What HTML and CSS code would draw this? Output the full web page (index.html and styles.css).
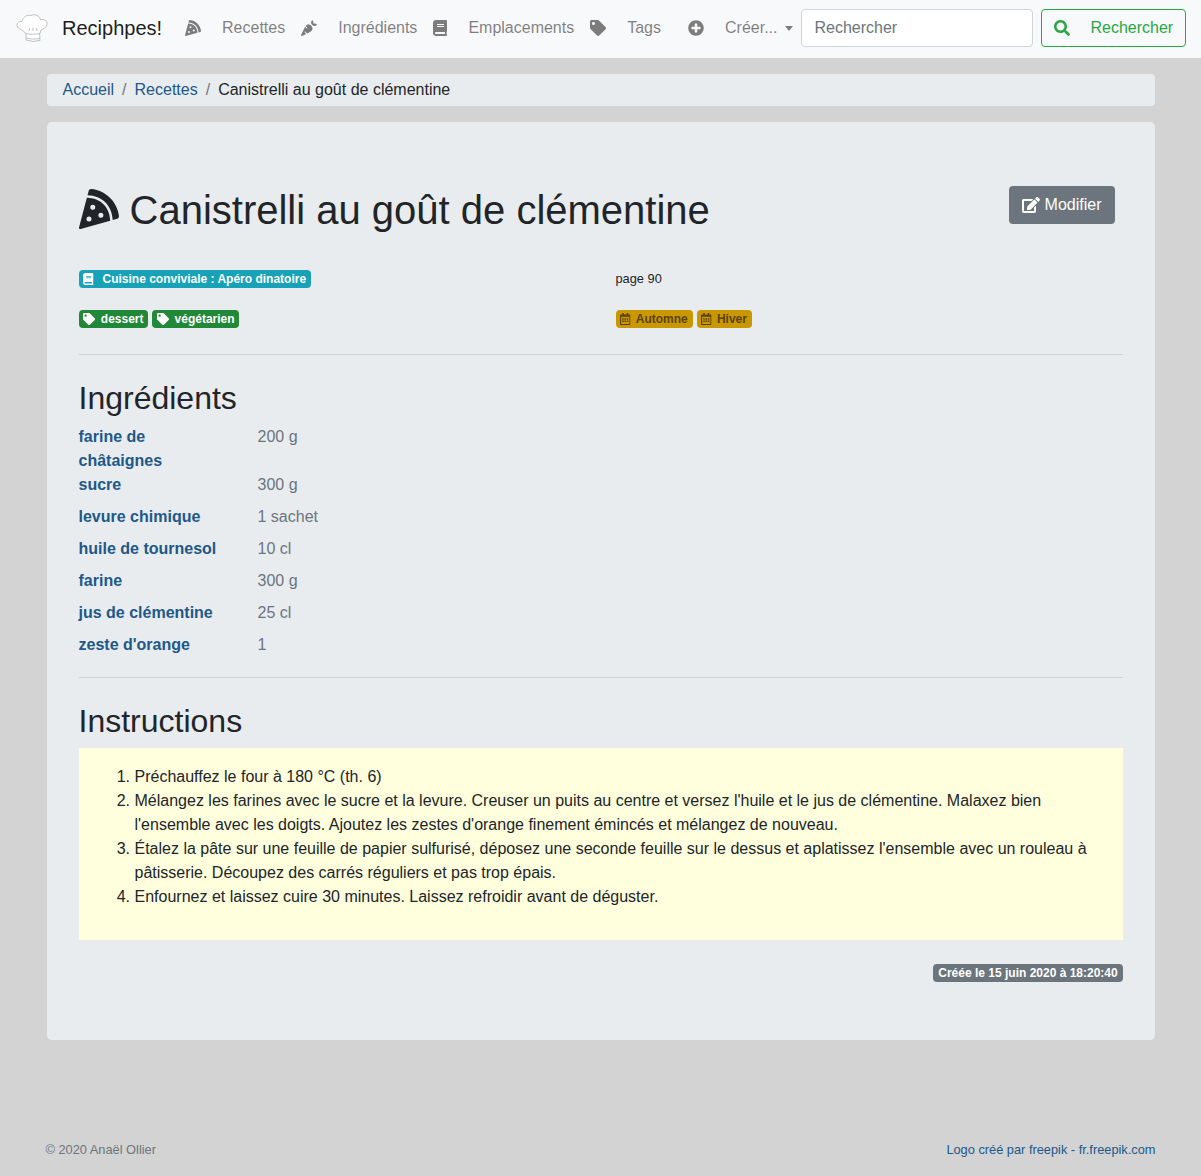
FILE: index.html
```html
<!DOCTYPE html>
<html lang="fr">
<head>
    <meta charset="UTF-8">
    <title>Reciphpes!</title>
    <link rel="stylesheet" href="styles.css">
</head>
<body>
    <svg class="defs" width="0" height="0">
        <symbol id="i-pizza" viewBox="0 0 512 512"><path d="M158.87.15c-16.16-1.52-31.2 8.42-35.33 24.12l-14.81 56.27c187.62 5.49 314.54 130.61 322.48 317l56.94-15.78c15.72-4.36 25.49-19.68 23.62-35.9C490.89 165.08 340.78 17.32 158.87.15zm-58.47 112L.55 491.64a16.21 16.21 0 0 0 20 19.75l379-105.1c-4.27-174.89-123.08-292.14-299.15-294.1zM128 416a32 32 0 1 1 32-32 32 32 0 0 1-32 32zm48-152a32 32 0 1 1 32-32 32 32 0 0 1-32 32zm104 104a32 32 0 1 1 32-32 32 32 0 0 1-32 32z"/></symbol>
        <symbol id="i-carrot" viewBox="0 0 512 512"><path d="M298.2 156.6c-52.7-25.7-114.5-10.5-150.2 32.8l55.2 55.2c6.3 6.3 6.3 16.4 0 22.6-3.1 3.1-7.2 4.7-11.3 4.7s-8.2-1.6-11.3-4.7L130.4 217 2.3 479.7c-2.9 6-3.1 13.3 0 19.7 5.4 11.1 18.9 15.7 30 10.3l133.6-65.2-49.2-49.2c-6.3-6.2-6.3-16.4 0-22.6 6.3-6.2 16.4-6.2 22.6 0l57 57 102-49.8c24-11.7 44.5-31.3 57.1-57.1 30.1-61.7 4.5-136.1-57.2-166.2zm92.1-34.9C409.8 81 399.2 32.9 360 0c-50.3 41.7-52.5 107.5-7.9 151.9l8 8c44.4 44.6 110.3 42.4 151.9-7.9-32.9-39.2-81-49.8-121.7-30.3z"/></symbol>
        <symbol id="i-book" viewBox="0 0 448 512"><path d="M448 360V24c0-13.3-10.7-24-24-24H96C43 0 0 43 0 96v320c0 53 43 96 96 96h328c13.3 0 24-10.7 24-24v-16c0-7.5-3.5-14.3-8.9-18.7-4.2-15.4-4.2-59.3 0-74.7 5.4-4.3 8.9-11.1 8.9-18.6zM128 134c0-3.3 2.7-6 6-6h212c3.3 0 6 2.7 6 6v20c0 3.3-2.7 6-6 6H134c-3.3 0-6-2.7-6-6v-20zm0 64c0-3.3 2.7-6 6-6h212c3.3 0 6 2.7 6 6v20c0 3.3-2.7 6-6 6H134c-3.3 0-6-2.7-6-6v-20zm253.4 250H96c-17.7 0-32-14.3-32-32 0-17.6 14.4-32 32-32h285.4c-1.9 17.1-1.9 46.9 0 64z"/></symbol>
        <symbol id="i-tag" viewBox="0 0 512 512"><path d="M0 252.118V48C0 21.49 21.49 0 48 0h204.118a48 48 0 0 1 33.941 14.059l211.882 211.882c18.745 18.745 18.745 49.137 0 67.882L293.823 497.941c-18.745 18.745-49.137 18.745-67.882 0L14.059 286.059A48 48 0 0 1 0 252.118zM112 64c-26.51 0-48 21.49-48 48s21.49 48 48 48 48-21.49 48-48-21.49-48-48-48z"/></symbol>
        <symbol id="i-plus" viewBox="0 0 512 512"><path d="M256 8C119 8 8 119 8 256s111 248 248 248 248-111 248-248S393 8 256 8zm144 276c0 6.6-5.4 12-12 12h-92v92c0 6.6-5.4 12-12 12h-56c-6.6 0-12-5.4-12-12v-92h-92c-6.6 0-12-5.4-12-12v-56c0-6.6 5.4-12 12-12h92v-92c0-6.6 5.4-12 12-12h56c6.6 0 12 5.4 12 12v92h92c6.6 0 12 5.4 12 12v56z"/></symbol>
        <symbol id="i-search" viewBox="0 0 512 512"><path d="M505 442.7L405.3 343c-4.5-4.5-10.6-7-17-7H372c27.6-35.3 44-79.7 44-128C416 93.1 322.9 0 208 0S0 93.1 0 208s93.1 208 208 208c48.3 0 92.7-16.4 128-44v16.3c0 6.4 2.5 12.5 7 17l99.7 99.7c9.4 9.4 24.6 9.4 33.9 0l28.3-28.3c9.4-9.4 9.4-24.6.1-34zM208 336c-70.7 0-128-57.2-128-128 0-70.7 57.2-128 128-128 70.7 0 128 57.2 128 128 0 70.7-57.2 128-128 128z"/></symbol>
        <symbol id="i-edit" viewBox="0 0 576 512"><path d="M402.6 83.2l90.2 90.2c3.8 3.8 3.8 10 0 13.8L274.4 405.6l-92.8 10.3c-12.4 1.4-22.9-9.1-21.5-21.5l10.3-92.8L388.8 83.2c3.8-3.8 10-3.8 13.8 0zm162-22.9l-48.8-48.8c-15.2-15.2-39.9-15.2-55.2 0l-35.4 35.4c-3.8 3.8-3.8 10 0 13.8l90.2 90.2c3.8 3.8 10 3.8 13.8 0l35.4-35.4c15.2-15.3 15.2-40 0-55.2zM384 346.2V448H64V128h229.8c3.2 0 6.2-1.3 8.5-3.5l40-40c7.6-7.6 2.2-20.5-8.5-20.5H48C21.5 64 0 85.5 0 112v352c0 26.5 21.5 48 48 48h352c26.5 0 48-21.5 48-48V306.2c0-10.7-12.9-16-20.5-8.5l-40 40c-2.2 2.3-3.5 5.3-3.5 8.5z"/></symbol>
        <symbol id="i-calendar" viewBox="0 0 448 512"><path d="M148 288h-40c-6.6 0-12-5.4-12-12v-40c0-6.6 5.4-12 12-12h40c6.6 0 12 5.4 12 12v40c0 6.6-5.4 12-12 12zm108-12v-40c0-6.6-5.4-12-12-12h-40c-6.6 0-12 5.4-12 12v40c0 6.6 5.4 12 12 12h40c6.6 0 12-5.4 12-12zm96 0v-40c0-6.6-5.4-12-12-12h-40c-6.6 0-12 5.4-12 12v40c0 6.6 5.4 12 12 12h40c6.6 0 12-5.4 12-12zm-96 96v-40c0-6.6-5.4-12-12-12h-40c-6.6 0-12 5.4-12 12v40c0 6.6 5.4 12 12 12h40c6.6 0 12-5.4 12-12zm-96 0v-40c0-6.6-5.4-12-12-12h-40c-6.6 0-12 5.4-12 12v40c0 6.6 5.4 12 12 12h40c6.6 0 12-5.4 12-12zm192 0v-40c0-6.6-5.4-12-12-12h-40c-6.6 0-12 5.4-12 12v40c0 6.6 5.4 12 12 12h40c6.6 0 12-5.4 12-12zm96-260v352c0 26.5-21.5 48-48 48H48c-26.5 0-48-21.5-48-48V112c0-26.5 21.5-48 48-48h48V12c0-6.6 5.4-12 12-12h40c6.6 0 12 5.4 12 12v52h128V12c0-6.6 5.4-12 12-12h40c6.6 0 12 5.4 12 12v52h48c26.5 0 48 21.5 48 48zm-48 346V160H48v298c0 3.3 2.7 6 6 6h340c3.3 0 6-2.7 6-6z"/></symbol>
    </svg>

    <nav class="navbar">
        <a class="brand" href="#">
            <svg class="brand-logo" viewBox="0 0 32 30">
                <path d="M10 19 L10 27 Q17 29.500 24 27.500 L23.500 19"/>
                <path d="M10 20.500 C6 16 3 16.500 1.500 14 C0 11 2.500 8 6 8.500 C7 4 11 1.500 15 2.500 C19 0.500 24 3 24.500 7 C28 5.500 31.500 8 31 11.500 C30.500 15 27 16 25 17 L24 20.500 C19 21.500 14 21.500 10 20.500 Z"/>
                <path d="M13 18 L13.500 15 M17 18 L17 14.500 M21 18 L20.500 15 M10 25 Q17 27 24 25.500"/>
            </svg>
            Reciphpes!
        </a>
        <ul class="nav-list">
            <li><a href="#"><svg class="nav-icon"><use href="#i-pizza"/></svg>Recettes</a></li>
            <li><a href="#"><svg class="nav-icon"><use href="#i-carrot"/></svg>Ingrédients</a></li>
            <li><a href="#"><svg class="nav-icon nav-icon-book"><use href="#i-book"/></svg>Emplacements</a></li>
            <li><a href="#"><svg class="nav-icon"><use href="#i-tag"/></svg>Tags</a></li>
            <li class="nav-create"><a href="#"><svg class="nav-icon"><use href="#i-plus"/></svg>Créer...<span class="caret"></span></a></li>
        </ul>
        <form class="search">
            <input class="search-input" type="text" placeholder="Rechercher">
            <button class="search-btn" type="button"><svg class="search-icon"><use href="#i-search"/></svg>Rechercher</button>
        </form>
    </nav>

    <div class="container">
        <ol class="breadcrumb">
            <li><a href="#">Accueil</a></li>
            <li><a href="#">Recettes</a></li>
            <li>Canistrelli au goût de clémentine</li>
        </ol>

        <main class="jumbotron">
            <div class="title-row">
                <h1><svg class="title-icon"><use href="#i-pizza"/></svg>Canistrelli au goût de clémentine</h1>
                <a class="btn-edit" href="#"><svg class="edit-icon"><use href="#i-edit"/></svg>Modifier</a>
            </div>

            <div class="meta">
                <div class="meta-cell">
                    <span class="badge badge-info"><svg class="badge-icon book-icon"><use href="#i-book"/></svg>Cuisine conviviale : Apéro dinatoire</span>
                </div>
                <div class="meta-cell">page 90</div>
                <div class="meta-cell">
                    <span class="badge badge-success"><svg class="badge-icon"><use href="#i-tag"/></svg>dessert</span>
                    <span class="badge badge-success"><svg class="badge-icon"><use href="#i-tag"/></svg>végétarien</span>
                </div>
                <div class="meta-cell">
                    <span class="badge badge-warning"><svg class="badge-icon cal-icon"><use href="#i-calendar"/></svg>Automne</span>
                    <span class="badge badge-warning"><svg class="badge-icon cal-icon"><use href="#i-calendar"/></svg>Hiver</span>
                </div>
            </div>

            <hr>

            <h2>Ingrédients</h2>
            <div class="ingredients">
                <div class="ing-row ing-row-first"><a href="#">farine de châtaignes</a><span>200 g</span></div>
                <div class="ing-row"><a href="#">sucre</a><span>300 g</span></div>
                <div class="ing-row"><a href="#">levure chimique</a><span>1 sachet</span></div>
                <div class="ing-row"><a href="#">huile de tournesol</a><span>10 cl</span></div>
                <div class="ing-row"><a href="#">farine</a><span>300 g</span></div>
                <div class="ing-row"><a href="#">jus de clémentine</a><span>25 cl</span></div>
                <div class="ing-row"><a href="#">zeste d'orange</a><span>1</span></div>
            </div>

            <hr>

            <h2>Instructions</h2>
            <div class="instructions">
                <ol>
                    <li>Préchauffez le four à 180 °C (th. 6)</li>
                    <li>Mélangez les farines avec le sucre et la levure. Creuser un puits au centre et versez l'huile et le jus de clémentine. Malaxez bien l'ensemble avec les doigts. Ajoutez les zestes d'orange finement émincés et mélangez de nouveau.</li>
                    <li>Étalez la pâte sur une feuille de papier sulfurisé, déposez une seconde feuille sur le dessus et aplatissez l'ensemble avec un rouleau à pâtisserie. Découpez des carrés réguliers et pas trop épais.</li>
                    <li>Enfournez et laissez cuire 30 minutes. Laissez refroidir avant de déguster.</li>
                </ol>
            </div>

            <div class="created">
                <span class="badge badge-secondary">Créée le 15 juin 2020 à 18:20:40</span>
            </div>
        </main>
    </div>

    <footer class="footer">
        <span>© 2020 Anaël Ollier</span>
        <a href="#">Logo créé par freepik - fr.freepik.com</a>
    </footer>
</body>
</html>
```

FILE: styles.css
```css
* {
    box-sizing: border-box;
}

body {
    margin: 0;
    min-height: 1176px;
    display: flex;
    flex-direction: column;
    font-family: "Liberation Sans", Arial, sans-serif;
    font-size: 16px;
    line-height: 24px;
    color: #212529;
    background-color: #d3d3d3;
}

a {
    color: #20588a;
    text-decoration: none;
}

.defs {
    display: block;
    height: 0;
}

svg {
    fill: currentColor;
}

/* navbar */
.navbar {
    display: flex;
    align-items: center;
    height: 58px;
    padding: 9px 16px 11px;
    background-color: #f8f9fa;
}

.brand {
    display: flex;
    align-items: center;
    margin-right: 15px;
    font-size: 20px;
    color: rgba(0, 0, 0, 0.9);
}

.brand-logo {
    width: 32px;
    height: 30px;
    margin-right: 14px;
    fill: #fff;
    stroke: #a8a8a8;
    stroke-width: 0.7;
}

.nav-list {
    display: flex;
    flex-grow: 1;
    margin: 0;
    padding: 0;
    list-style: none;
}

.nav-list a {
    display: flex;
    align-items: center;
    padding: 8px;
    color: rgba(0, 0, 0, 0.5);
}

.nav-icon {
    width: 16px;
    height: 16px;
    margin-right: 21px;
}

.nav-icon-book {
    width: 14px;
}

.nav-create {
    margin-left: 11px;
}

.caret {
    margin-left: 8px;
    border-top: 5px solid;
    border-left: 4.8px solid transparent;
    border-right: 4.8px solid transparent;
}

.search {
    display: flex;
}

.search-input {
    width: 232px;
    height: 38px;
    padding: 6px 12px;
    margin-right: 8px;
    border: 1px solid #ced4da;
    border-radius: 4px;
    font: inherit;
    background-color: #fff;
}

.search-input::placeholder {
    color: #6c757d;
}

.search-btn {
    display: flex;
    align-items: center;
    height: 38px;
    padding: 6px 12px;
    border: 1px solid #28a745;
    border-radius: 4px;
    font: inherit;
    color: #28a745;
    background: transparent;
}

.search-icon {
    width: 16px;
    height: 16px;
    margin-right: 20px;
}

/* contenu */
.container {
    width: 1138px;
    margin: 0 auto;
    padding: 16px 15px 0;
}

.breadcrumb {
    display: flex;
    height: 32px;
    margin: 0 0 16px;
    padding: 4px 16px;
    list-style: none;
    border-radius: 4px;
    background-color: #e9ecef;
}

.breadcrumb li + li::before {
    content: "/";
    padding: 0 8px;
    color: #6c757d;
}

.jumbotron {
    height: 918px;
    padding: 64px 32px 32px;
    border-radius: 4.8px;
    background-color: #e9ecef;
}

.title-row {
    display: flex;
    justify-content: space-between;
    height: 84px;
}

h1 {
    display: flex;
    align-items: center;
    height: 48px;
    margin: 0;
    font-size: 40px;
    font-weight: 400;
    line-height: 48px;
}

.title-icon {
    width: 40px;
    height: 40px;
    margin: 0 11px 2px 0;
}

.btn-edit {
    display: flex;
    align-items: center;
    height: 38px;
    margin-right: 8px;
    padding: 6px 13px;
    border-radius: 4px;
    color: #fff;
    background-color: #6c757d;
}

.edit-icon {
    width: 18px;
    height: 16px;
    margin-right: 5px;
}

.meta {
    display: grid;
    grid-template-columns: 537px 1fr;
    row-gap: 16px;
}

.meta-cell {
    display: flex;
    gap: 4px;
    height: 24px;
    font-size: 12.8px;
    line-height: 18px;
}

.badge {
    display: inline-flex;
    align-items: center;
    height: 18px;
    padding: 0 4.8px;
    border-radius: 4px;
    font-size: 12px;
    font-weight: 700;
    line-height: 18px;
    white-space: nowrap;
}

.badge-icon {
    width: 12px;
    height: 12px;
    margin-right: 5.5px;
}

.book-icon {
    width: 10.5px;
    margin-right: 8.7px;
}

.cal-icon {
    width: 10.5px;
    margin-right: 5px;
}

.badge-info {
    color: #fff;
    background-color: #17a2b8;
}

.badge-success {
    color: #fff;
    background-color: #218838;
}

.badge-warning {
    color: #5c4200;
    background-color: #c99700;
}

.badge-secondary {
    color: #fff;
    background-color: #6c757d;
}

hr {
    margin: 20px 0 0;
    border: 0;
    border-top: 1px solid rgba(0, 0, 0, 0.1);
}

h2 {
    margin: 24px 0 8px;
    font-size: 32px;
    font-weight: 400;
    line-height: 38px;
}

.ingredients {
    margin-bottom: 12px;
}

.ing-row {
    display: grid;
    grid-template-columns: 179px 1fr;
    margin-bottom: 8px;
    color: #6c757d;
}

.ing-row-first {
    margin-bottom: 0;
}

.ing-row a {
    width: 150px;
    font-weight: 700;
}

.instructions {
    height: 192px;
    padding: 17px 16px 16px;
    color: #212529;
    background-color: #ffd;
}

.instructions ol {
    margin: 0;
    padding-left: 40px;
}

.created {
    display: flex;
    justify-content: flex-end;
    margin-top: 24px;
}

/* pied de page */
.footer {
    display: flex;
    justify-content: space-between;
    width: 1110px;
    margin: auto auto 0;
    padding: 0 0 14px;
    font-size: 12.8px;
    line-height: 24px;
    color: #6c757d;
}
```
